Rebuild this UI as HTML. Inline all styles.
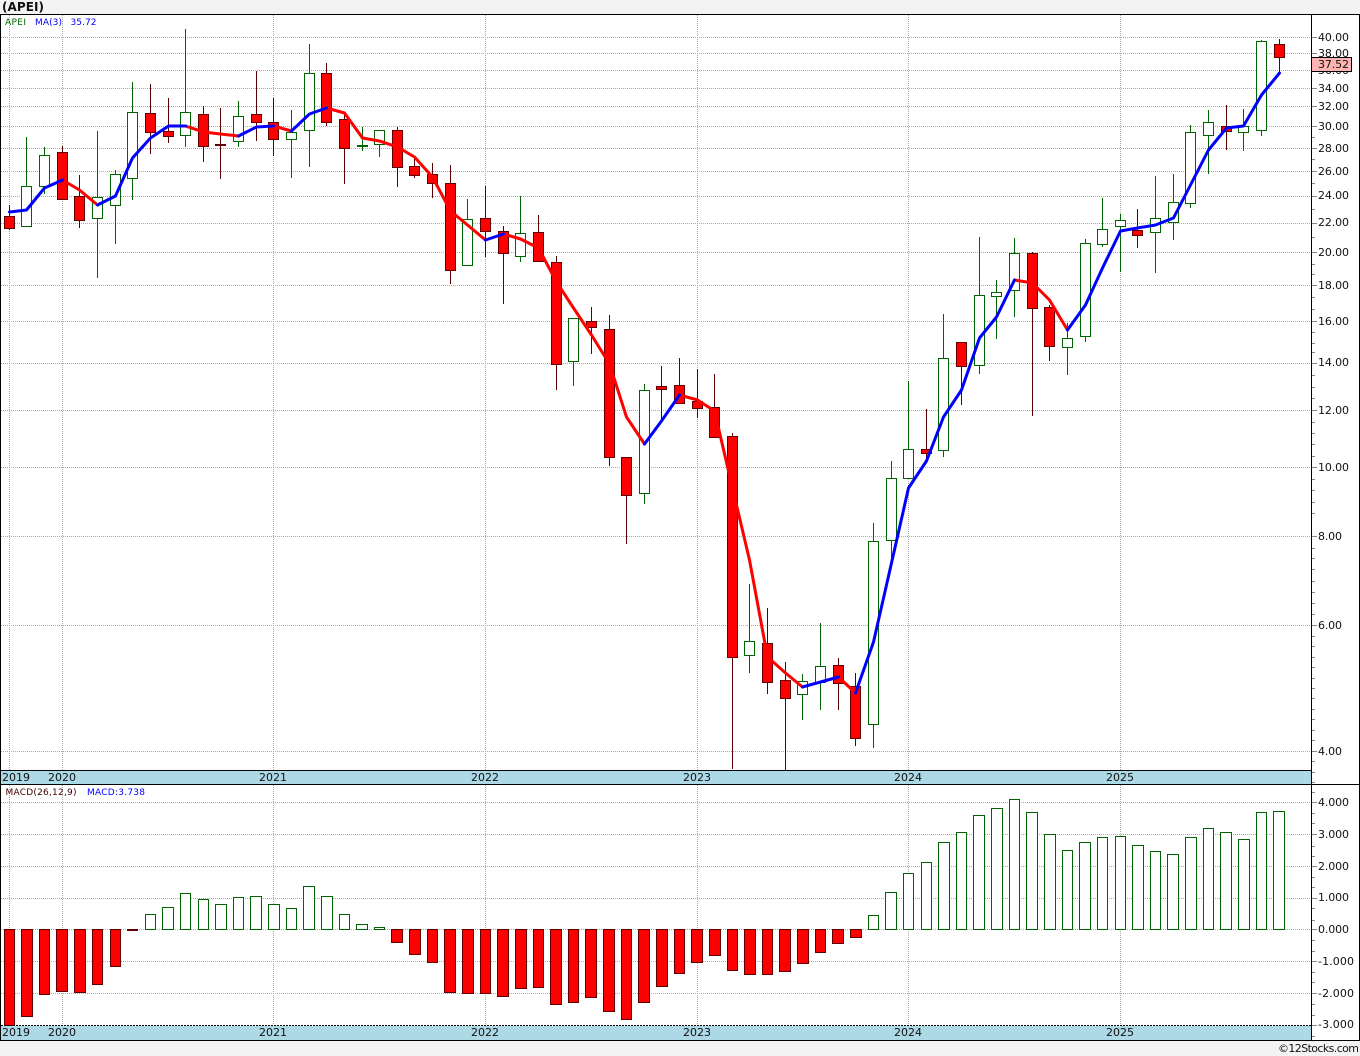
<!DOCTYPE html>
<html>
<head>
<meta charset="utf-8">
<title>APEI</title>
<style>
html,body{margin:0;padding:0;background:#f3f3f3;}
svg{display:block;position:absolute;left:0;top:0;}
text{font-family:"DejaVu Sans","Liberation Sans",sans-serif;font-size:11px;fill:#111;}
.s{font-size:9px;}
.c{shape-rendering:crispEdges;}
</style>
</head>
<body>
<svg width="1360" height="1056" viewBox="0 0 1360 1056" xmlns="http://www.w3.org/2000/svg">
<rect x="0" y="0" width="1360" height="1056" fill="#f3f3f3"/>
<rect x="0" y="14" width="1360" height="1026" fill="#fff"/>
<text x="2" y="11" style="font-size:12px;font-weight:bold" textLength="42">(APEI)</text>

<!-- grid -->
<g class="c" stroke="#aaa" stroke-width="1" stroke-dasharray="1 1" fill="none">
<path d="M1 37.5H1311M1 53.5H1311M1 70.5H1311M1 88.5H1311M1 106.5H1311M1 126.5H1311M1 148.5H1311M1 171.5H1311M1 196.5H1311M1 223.5H1311M1 252.5H1311M1 285.5H1311M1 321.5H1311M1 363.5H1311M1 410.5H1311M1 467.5H1311M1 536.5H1311M1 625.5H1311M1 751.5H1311"/>
<path d="M9.5 15V770M62.5 15V770M273.5 15V770M485.5 15V770M697.5 15V770M908.5 15V770M1120.5 15V770"/>
<path d="M1 802.5H1311M1 834.5H1311M1 866.5H1311M1 898.5H1311M1 929.5H1311M1 961.5H1311M1 993.5H1311"/>
<path d="M9.5 785V1025M62.5 785V1025M273.5 785V1025M485.5 785V1025M697.5 785V1025M908.5 785V1025M1120.5 785V1025"/>
</g>

<!-- wicks -->
<path class="c" fill="none" stroke="#5a0000" d="M9.5 205V230M62.5 146V199M79.5 175V228M150.5 84V154M168.5 98V143M203.5 106V162M220.5 108V179M256.5 71V141M273.5 98V156M326.5 63V126M344.5 112V184M397.5 127V187M414.5 157V178M432.5 163V198M450.5 165V284M485.5 186V257M503.5 226V304M538.5 215V262M556.5 256V390M591.5 307V354M609.5 315V466M626.5 457V544M661.5 366V420M679.5 358V404M697.5 369V418M714.5 374V438M732.5 433V769M767.5 608V694M785.5 662V770M838.5 658V710M855.5 673V746M926.5 409V462M961.5 342V405M1032.5 252V416M1049.5 305V361M1137.5 209V248M1226.5 105V150M1279.5 39V73"/>
<path class="c" fill="none" stroke="#006400" d="M26.5 137V226M44.5 147V194M97.5 131V278M115.5 170V244M132.5 82V200M185.5 29V147M238.5 101V147M291.5 110V178M309.5 44V167M362.5 127V151M379.5 130V157M467.5 199V265M520.5 196V262M573.5 318V386M644.5 384V504M749.5 584V673M802.5 674V720M820.5 623V710M873.5 523V748M891.5 461V563M908.5 381V449M943.5 314V457M979.5 237V374M996.5 280V339M1014.5 238V317M1067.5 323V375M1085.5 239V342M1102.5 198V247M1120.5 214V272M1155.5 176V273M1173.5 174V240M1190.5 125V208M1208.5 110V174M1243.5 109V151M1261.5 40V136"/>

<!-- bodies -->
<path class="c" fill="#fff" stroke="#006400" d="M21.5 186.5h10v40h-10zM39.5 155.5h10v31h-10zM92.5 197.5h10v21h-10zM110.5 174.5h10v31h-10zM127.5 112.5h10v66h-10zM180.5 112.5h10v23h-10zM233.5 116.5h10v25h-10zM286.5 132.5h10v7h-10zM304.5 73.5h10v57h-10zM357.5 145.5h10v1h-10zM374.5 130.5h10v14h-10zM462.5 219.5h10v46h-10zM515.5 233.5h10v23h-10zM568.5 318.5h10v43h-10zM639.5 390.5h10v103h-10zM744.5 641.5h10v14h-10zM797.5 681.5h10v13h-10zM815.5 666.5h10v16h-10zM868.5 541.5h10v183h-10zM886.5 478.5h10v62h-10zM903.5 449.5h10v29h-10zM938.5 358.5h10v92h-10zM974.5 295.5h10v70h-10zM991.5 292.5h10v4h-10zM1009.5 253.5h10v37h-10zM1062.5 338.5h10v9h-10zM1080.5 243.5h10v93h-10zM1097.5 229.5h10v15h-10zM1115.5 220.5h10v6h-10zM1150.5 218.5h10v14h-10zM1168.5 202.5h10v20h-10zM1185.5 132.5h10v71h-10zM1203.5 122.5h10v13h-10zM1238.5 126.5h10v6h-10zM1256.5 41.5h10v89h-10z"/>
<path class="c" fill="#ff0000" stroke="#600000" d="M4.5 216.5h10v12h-10zM57.5 152.5h10v47h-10zM74.5 196.5h10v24h-10zM145.5 113.5h10v19h-10zM163.5 131.5h10v5h-10zM198.5 114.5h10v32h-10zM215.5 144.5h10v1h-10zM251.5 114.5h10v8h-10zM268.5 122.5h10v17h-10zM321.5 73.5h10v49h-10zM339.5 119.5h10v29h-10zM392.5 130.5h10v37h-10zM409.5 166.5h10v9h-10zM427.5 174.5h10v9h-10zM445.5 183.5h10v87h-10zM480.5 218.5h10v13h-10zM498.5 231.5h10v22h-10zM533.5 232.5h10v29h-10zM551.5 262.5h10v102h-10zM586.5 321.5h10v6h-10zM604.5 329.5h10v128h-10zM621.5 457.5h10v38h-10zM656.5 386.5h10v3h-10zM674.5 385.5h10v18h-10zM692.5 401.5h10v7h-10zM709.5 407.5h10v30h-10zM727.5 436.5h10v221h-10zM762.5 643.5h10v39h-10zM780.5 680.5h10v18h-10zM833.5 665.5h10v18h-10zM850.5 686.5h10v52h-10zM921.5 449.5h10v4h-10zM956.5 342.5h10v24h-10zM1027.5 253.5h10v55h-10zM1044.5 307.5h10v39h-10zM1132.5 230.5h10v5h-10zM1221.5 126.5h10v5h-10zM1274.5 44.5h10v13h-10z"/>

<!-- MA line -->
<g fill="none" stroke-width="3" stroke-linejoin="round" stroke-linecap="round">
<path stroke="#ff0000" d="M62.5 180L79.5 190L97.5 205M185.5 126L203.5 132L220.5 134L238.5 136M273.5 126L291.5 131M326.5 108L344.5 113L362.5 138L379.5 141L397.5 147L414.5 157L432.5 177L450.5 211L467.5 225L485.5 240M503.5 234L520.5 239L538.5 248L556.5 282L573.5 308L591.5 335L609.5 364L626.5 417L644.5 444M679.5 395L697.5 400L714.5 411L732.5 488L749.5 560L767.5 657L785.5 673L802.5 687M838.5 677L855.5 693M1014.5 280L1032.5 283L1049.5 300L1067.5 330"/>
<path stroke="#0000ff" d="M9.5 212L26.5 210L44.5 188L62.5 180M97.5 205L115.5 196L132.5 158L150.5 138L168.5 126L185.5 126M238.5 136L256.5 127L273.5 126M291.5 131L309.5 114L326.5 108M485.5 240L503.5 234M644.5 444L661.5 421L679.5 395M802.5 687L820.5 682L838.5 677M855.5 693L873.5 642L891.5 563L908.5 488L926.5 461L943.5 417L961.5 390L979.5 338L996.5 317L1014.5 280M1067.5 330L1085.5 305L1102.5 268L1120.5 231L1137.5 228L1155.5 225L1173.5 218L1190.5 185L1208.5 150L1226.5 128L1243.5 126L1261.5 95L1279.5 73"/>
</g>

<!-- MACD -->
<path class="c" fill="#fff" stroke="#006400" d="M145.5 914.5h10v15h-10zM162.5 907.5h11v22h-11zM180.5 893.5h10v36h-10zM198.5 899.5h10v30h-10zM215.5 904.5h11v25h-11zM233.5 897.5h10v32h-10zM250.5 896.5h11v33h-11zM268.5 904.5h11v25h-11zM286.5 908.5h10v21h-10zM303.5 886.5h11v43h-11zM321.5 896.5h11v33h-11zM339.5 914.5h10v15h-10zM356.5 924.5h11v5h-11zM374.5 927.5h10v2h-10zM868.5 915.5h10v14h-10zM885.5 892.5h11v37h-11zM903.5 873.5h10v56h-10zM921.5 862.5h10v67h-10zM938.5 842.5h11v87h-11zM956.5 832.5h10v97h-10zM973.5 815.5h11v114h-11zM991.5 808.5h11v121h-11zM1009.5 799.5h10v130h-10zM1026.5 812.5h11v117h-11zM1044.5 834.5h11v95h-11zM1062.5 850.5h10v79h-10zM1079.5 842.5h11v87h-11zM1097.5 837.5h10v92h-10zM1115.5 836.5h10v93h-10zM1132.5 845.5h11v84h-11zM1150.5 851.5h10v78h-10zM1167.5 854.5h11v75h-11zM1185.5 837.5h11v92h-11zM1203.5 828.5h10v101h-10zM1220.5 832.5h11v97h-11zM1238.5 839.5h11v90h-11zM1256.5 812.5h10v117h-10zM1273.5 811.5h11v118h-11z"/>
<path class="c" fill="#ff0000" stroke="#600000" d="M4.5 929.5h10v96h-10zM21.5 929.5h11v87h-11zM39.5 929.5h10v65h-10zM56.5 929.5h11v62h-11zM74.5 929.5h11v63h-11zM92.5 929.5h10v55h-10zM110.5 929.5h10v37h-10zM127.5 929.5h10v1h-10zM391.5 929.5h11v13h-11zM409.5 929.5h11v25h-11zM427.5 929.5h10v33h-10zM444.5 929.5h11v63h-11zM462.5 929.5h11v64h-11zM480.5 929.5h10v64h-10zM497.5 929.5h11v67h-11zM515.5 929.5h11v59h-11zM533.5 929.5h10v58h-10zM550.5 929.5h11v75h-11zM568.5 929.5h10v73h-10zM585.5 929.5h11v68h-11zM603.5 929.5h11v82h-11zM621.5 929.5h10v90h-10zM638.5 929.5h11v73h-11zM656.5 929.5h11v57h-11zM674.5 929.5h10v44h-10zM691.5 929.5h11v33h-11zM709.5 929.5h11v26h-11zM727.5 929.5h10v41h-10zM744.5 929.5h11v45h-11zM762.5 929.5h10v45h-10zM779.5 929.5h11v42h-11zM797.5 929.5h11v34h-11zM815.5 929.5h10v23h-10zM832.5 929.5h11v14h-11zM850.5 929.5h11v8h-11z"/>

<!-- bands -->
<rect x="1" y="771" width="1310" height="13" fill="#add8e6"/>
<rect x="1" y="1026" width="1310" height="14" fill="#add8e6"/>
<path class="c" stroke="#000" fill="none" d="M0 770.5H1311M0 784.5H1360M0 1040.5H1360M0 14.5H1360M0.5 14V1041M1311.5 14V1041M1359.5 14V1041"/>
<path class="c" stroke="#000" fill="none" stroke-dasharray="2 1" d="M1 1025.5H1311"/>

<!-- ticks -->
<path class="c" stroke="#888" fill="none" d="M1312 37.5h5M1312 53.5h5M1312 70.5h5M1312 88.5h5M1312 106.5h5M1312 126.5h5M1312 148.5h5M1312 171.5h5M1312 196.5h5M1312 223.5h5M1312 252.5h5M1312 285.5h5M1312 321.5h5M1312 363.5h5M1312 410.5h5M1312 467.5h5M1312 536.5h5M1312 625.5h5M1312 751.5h5M1312 137.5h3M1312 159.5h3M1312 183.5h3M1312 209.5h3M1312 237.5h3M1312 264.5h3M1312 274.5h3M1312 297.5h3M1312 309.5h3M1312 332.5h3M1312 343.5h3M1312 352.5h3M1312 375.5h3M1312 387.5h3M1312 398.5h3M1312 422.5h3M1312 433.5h3M1312 444.5h3M1312 456.5h3M1312 479.5h3M1312 490.5h3M1312 502.5h3M1312 513.5h3M1312 548.5h3M1312 558.5h3M1312 569.5h3M1312 581.5h3M1312 592.5h3M1312 603.5h3M1312 614.5h3M1312 636.5h3M1312 646.5h3M1312 657.5h3M1312 667.5h3M1312 678.5h3M1312 688.5h3M1312 698.5h3M1312 709.5h3M1312 719.5h3M1312 730.5h3M1312 740.5h3M1312 761.5h3M1312 772.5h3M1312 782.5h3"/>
<path class="c" stroke="#888" fill="none" d="M1312 802.5h5M1312 834.5h5M1312 866.5h5M1312 898.5h5M1312 929.5h5M1312 961.5h5M1312 993.5h5M1312 1025.5h5M1312 792.5h3M1312 813.5h3M1312 823.5h3M1312 846.5h3M1312 856.5h3M1312 877.5h3M1312 887.5h3M1312 908.5h3M1312 920.5h3M1312 940.5h3M1312 951.5h3M1312 972.5h3M1312 982.5h3M1312 1004.5h3M1312 1015.5h3M1312 1036.5h3"/>

<!-- legends -->
<text class="s" x="5" y="25" style="fill:#006400" textLength="21">APEI</text>
<text class="s" x="35" y="25" style="fill:#0000ff" textLength="27">MA(3)</text>
<text class="s" x="70.5" y="25" style="fill:#0000ff" textLength="26">35.72</text>
<text class="s" x="5.5" y="795" style="fill:#400000" textLength="71">MACD(26,12,9)</text>
<text class="s" x="87" y="795" style="fill:#0000ff" textLength="58">MACD:3.738</text>

<!-- year labels -->
<text x="2" y="781">2019</text><text x="48" y="781">2020</text><text x="259" y="781">2021</text><text x="471" y="781">2022</text><text x="683" y="781">2023</text><text x="894" y="781">2024</text><text x="1106" y="781">2025</text>
<text x="2" y="1036">2019</text><text x="48" y="1036">2020</text><text x="259" y="1036">2021</text><text x="471" y="1036">2022</text><text x="683" y="1036">2023</text><text x="894" y="1036">2024</text><text x="1106" y="1036">2025</text>

<!-- axis labels -->
<g>
<text x="1318" y="41" textLength="31">40.00</text>
<text x="1318" y="57" textLength="31">38.00</text>
<text x="1318" y="74" textLength="31">36.00</text>
<text x="1318" y="92" textLength="31">34.00</text>
<text x="1318" y="110" textLength="31">32.00</text>
<text x="1318" y="130" textLength="31">30.00</text>
<text x="1318" y="152" textLength="31">28.00</text>
<text x="1318" y="175" textLength="31">26.00</text>
<text x="1318" y="199" textLength="31">24.00</text>
<text x="1318" y="226" textLength="31">22.00</text>
<text x="1318" y="256" textLength="31">20.00</text>
<text x="1318" y="289" textLength="31">18.00</text>
<text x="1318" y="325" textLength="31">16.00</text>
<text x="1318" y="366" textLength="31">14.00</text>
<text x="1318" y="414" textLength="31">12.00</text>
<text x="1318" y="471" textLength="31">10.00</text>
<text x="1318" y="540" textLength="24">8.00</text>
<text x="1318" y="629" textLength="24">6.00</text>
<text x="1318" y="755" textLength="24">4.00</text>
<text x="1318" y="806" textLength="31">4.000</text>
<text x="1318" y="838" textLength="31">3.000</text>
<text x="1318" y="870" textLength="31">2.000</text>
<text x="1318" y="901" textLength="31">1.000</text>
<text x="1318" y="933" textLength="31">0.000</text>
<text x="1318" y="965" textLength="36">-1.000</text>
<text x="1318" y="997" textLength="36">-2.000</text>
<text x="1318" y="1028" textLength="36">-3.000</text>
</g>

<!-- price tag -->
<rect class="c" x="1311.5" y="57.5" width="40" height="14" fill="#ffb3b3" stroke="#000"/>
<text x="1318" y="68" textLength="31">37.52</text>

<text x="1278" y="1052" textLength="81">©12Stocks.com</text>
</svg>
</body>
</html>
